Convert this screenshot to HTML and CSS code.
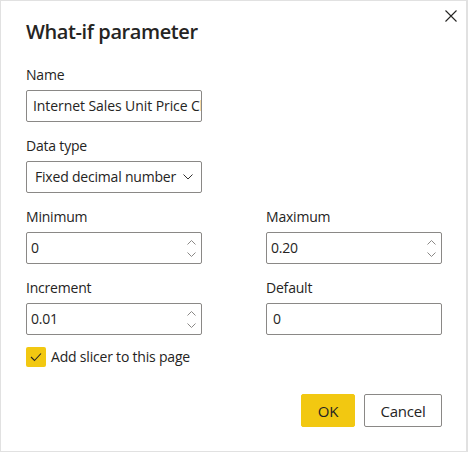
FILE: index.html
```html
<!DOCTYPE html>
<html>
<head>
<meta charset="utf-8">
<link rel="stylesheet" href="styles.css">
</head>
<body>
<div class="dialog">
  <button class="close" aria-label="Close">
    <svg width="12" height="12" viewBox="0 0 12 12"><path d="M0.5 0.5 L11.5 11.5 M11.5 0.5 L0.5 11.5" stroke="#252423" stroke-width="1.1" fill="none"/></svg>
  </button>
  <h1 class="title">What-if parameter</h1>
  <div class="form">
    <div class="field">
      <label class="label">Name</label>
      <div class="box text-box name-box"><span class="value clip">Internet Sales Unit Price Change</span></div>
    </div>
    <div class="field">
      <label class="label">Data type</label>
      <div class="box select-box"><span class="value">Fixed decimal number</span>
        <svg class="chev" width="10" height="6" viewBox="0 0 10 6"><path d="M0.5 0.5 L5 5 L9.5 0.5" stroke="#323130" stroke-width="1" fill="none"/></svg>
      </div>
    </div>
    <div class="row">
      <div class="field">
        <label class="label">Minimum</label>
        <div class="box spin-box"><span class="value">0</span>
          <span class="spin">
            <svg width="9" height="5" viewBox="0 0 9 5"><path d="M0.5 4.5 L4.5 0.5 L8.5 4.5" stroke="#8a8886" stroke-width="1" fill="none"/></svg>
            <svg width="9" height="5" viewBox="0 0 9 5"><path d="M0.5 0.5 L4.5 4.5 L8.5 0.5" stroke="#8a8886" stroke-width="1" fill="none"/></svg>
          </span>
        </div>
      </div>
      <div class="field">
        <label class="label">Maximum</label>
        <div class="box spin-box"><span class="value">0.20</span>
          <span class="spin">
            <svg width="9" height="5" viewBox="0 0 9 5"><path d="M0.5 4.5 L4.5 0.5 L8.5 4.5" stroke="#8a8886" stroke-width="1" fill="none"/></svg>
            <svg width="9" height="5" viewBox="0 0 9 5"><path d="M0.5 0.5 L4.5 4.5 L8.5 0.5" stroke="#8a8886" stroke-width="1" fill="none"/></svg>
          </span>
        </div>
      </div>
    </div>
    <div class="row">
      <div class="field">
        <label class="label">Increment</label>
        <div class="box spin-box"><span class="value">0.01</span>
          <span class="spin">
            <svg width="9" height="5" viewBox="0 0 9 5"><path d="M0.5 4.5 L4.5 0.5 L8.5 4.5" stroke="#8a8886" stroke-width="1" fill="none"/></svg>
            <svg width="9" height="5" viewBox="0 0 9 5"><path d="M0.5 0.5 L4.5 4.5 L8.5 0.5" stroke="#8a8886" stroke-width="1" fill="none"/></svg>
          </span>
        </div>
      </div>
      <div class="field">
        <label class="label">Default</label>
        <div class="box text-box plain"><span class="value">0</span></div>
      </div>
    </div>
  </div>
  <div class="check-row">
    <span class="checkbox">
      <svg width="12" height="10" viewBox="0 0 12 10"><path d="M1 5 L4.5 8.5 L11 1.5" stroke="#252423" stroke-width="1.1" fill="none"/></svg>
    </span>
    <span class="check-label">Add slicer to this page</span>
  </div>
  <div class="actions">
    <button class="btn primary">OK</button>
    <button class="btn secondary">Cancel</button>
  </div>
</div>
</body>
</html>
```

FILE: styles.css
```css
html, body {
  margin: 0;
  padding: 0;
  background: #ffffff;
}
body {
  font-family: "Open Sans", "Noto Sans", sans-serif;
  color: #252423;
}
.dialog {
  position: relative;
  width: 468px;
  height: 452px;
  box-sizing: border-box;
  border: 1px solid #e1e1e1;
  border-right-width: 2px;
  padding: 0 0 0 25px;
  display: flex;
  flex-direction: column;
}
.close {
  position: absolute;
  top: 8px;
  right: 8px;
  width: 14px;
  height: 14px;
  padding: 1px;
  border: 0;
  background: transparent;
  line-height: 0;
}
.title {
  margin: 17px 0 0 0;
  font-size: 20px;
  line-height: 28px;
  font-weight: 600;
  letter-spacing: -0.4px;
}
.form {
  margin-top: 19px;
  display: flex;
  flex-direction: column;
  gap: 14px;
}
.row {
  display: grid;
  grid-template-columns: 176px 176px;
  column-gap: 64px;
}
.field {
  display: flex;
  flex-direction: column;
  width: 176px;
}
.label {
  font-size: 14px;
  line-height: 20px;
  margin-bottom: 5px;
  letter-spacing: -0.2px;
}
.box {
  box-sizing: border-box;
  height: 32px;
  border: 1px solid #8a8886;
  border-radius: 2px;
  display: flex;
  align-items: center;
  font-size: 14px;
  letter-spacing: -0.2px;
  overflow: hidden;
  white-space: nowrap;
}
.text-box { padding-left: 5px; }
.text-box.plain { padding-left: 6px; }
.name-box {
  padding-left: 6px;
  letter-spacing: -0.08px;
}
.select-box {
  padding: 0 8px 0 8px;
  justify-content: space-between;
}
.spin-box {
  padding: 0 5px 0 4px;
  justify-content: space-between;
}
.value {
  line-height: 20px;
}
.clip {
  overflow: hidden;
}
.chev { flex: none; }
.spin {
  display: flex;
  flex-direction: column;
  gap: 7px;
  line-height: 0;
}
.check-row {
  margin-top: 12px;
  display: flex;
  align-items: center;
  gap: 5px;
}
.checkbox {
  box-sizing: border-box;
  width: 20px;
  height: 20px;
  border-radius: 2px;
  background: #f2c811;
  display: flex;
  align-items: center;
  justify-content: center;
}
.check-label {
  font-size: 14px;
  line-height: 20px;
  letter-spacing: -0.2px;
}
.actions {
  margin-top: 27px;
  display: flex;
  justify-content: flex-end;
  gap: 9px;
  padding-right: 24px;
}
.btn {
  height: 33px;
  box-sizing: border-box;
  border-radius: 2px;
  font-family: "Open Sans", "Noto Sans", sans-serif;
  font-size: 15px;
  font-weight: 400;
  letter-spacing: -0.2px;
  color: #252423;
  padding: 0;
}
.primary {
  width: 54px;
  background: #f2c811;
  border: 1px solid #f2c811;
}
.secondary {
  width: 78px;
  background: #ffffff;
  border: 1px solid #8a8886;
}
```
